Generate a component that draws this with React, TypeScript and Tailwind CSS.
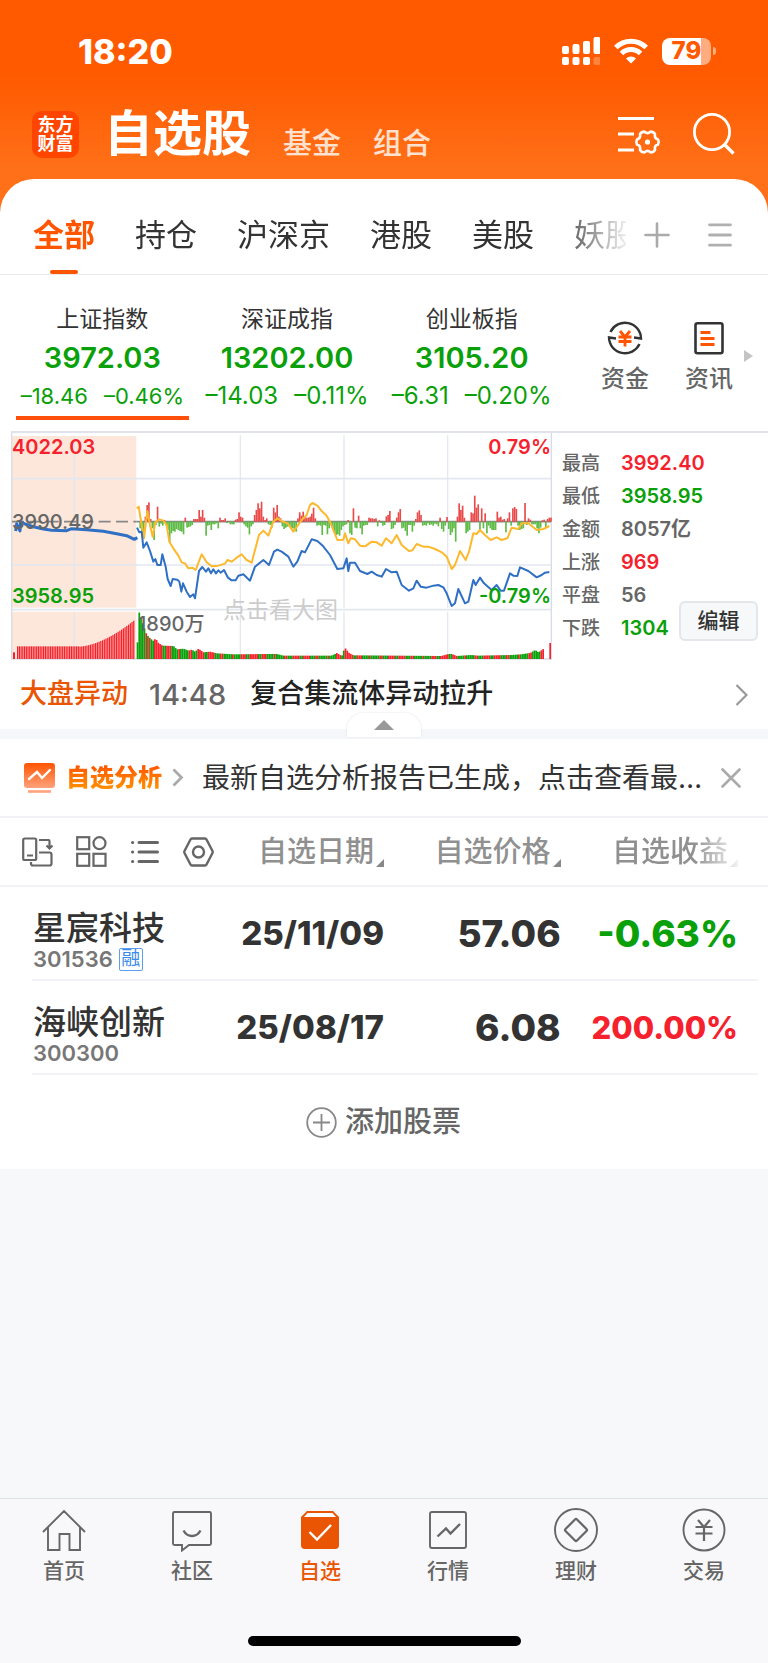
import { useState } from "react";

const tabs = ["全部", "持仓", "沪深京", "港股", "美股", "妖股"];

const indices = [
  { name: "上证指数", value: "3972.03", change: "–18.46", percent: "–0.46%", size: "text-[22px]" },
  { name: "深证成指", value: "13202.00", change: "–14.03", percent: "–0.11%", size: "text-2xl" },
  { name: "创业板指", value: "3105.20", change: "–6.31", percent: "–0.20%", size: "text-2xl" },
];

const stats = [
  { label: "最高", value: "3992.40", color: "text-[#f5222d]" },
  { label: "最低", value: "3958.95", color: "text-[#0aa00a]" },
  { label: "金额", value: "8057亿", color: "text-[#666]" },
  { label: "上涨", value: "969", color: "text-[#f5222d]" },
  { label: "平盘", value: "56", color: "text-[#666]" },
  { label: "下跌", value: "1304", color: "text-[#0aa00a]" },
];

const stocks = [
  { name: "星宸科技", code: "301536", margin: true, date: "25/11/09", price: "57.06", profit: "-0.63%", profitStyle: "text-[37px] text-[#0aa00a]" },
  { name: "海峡创新", code: "300300", margin: false, date: "25/08/17", price: "6.08", profit: "200.00%", profitStyle: "text-[31px] text-[#f5222d]" },
];

// Chart data, in units of the 1623 x 681 view box
const auctionLine =
  "14,294 17,272 27,294 29,266 42,273 67,281 97,288 122,292 167,293 182,287 227,290 277,295 317,302 347,308 370,319 379,314";

const priceLine =
  "378,284 385,298 392,296 397,344 407,328 417,354 427,386 433,378 439,396 449,396 454,364 464,401 470,438 479,459 485,438 499,440 505,446 511,476 516,451 527,476 537,492 547,484 552,496 564,414 574,402 585,416 592,406 600,421 607,409 615,421 622,412 629,419 639,411 651,434 662,442 674,442 682,428 697,424 717,443 732,401 757,381 774,396 789,356 799,350 812,356 " +
  "832,371 847,401 859,386 872,354 882,358 902,319 919,324 935,338 957,366 979,408 997,406 1007,376 1012,414 1017,389 1032,389 1047,414 1069,423 1082,416 1097,426 1112,431 1125,408 1142,418 1157,416 1172,456 1194,473 1207,466 1217,443 1229,461 1247,464 1267,458 1282,456 1297,463 1307,481 1322,519 1332,511 1342,468 1362,511 1372,506 1387,441 1394,456 1407,434 1419,451 1442,471 1457,456 1469,473 1479,473 1497,421 1507,428 1519,429 1527,403 1552,414 1577,433 1592,426 1602,419 1615,417";

const averageLine =
  "377,226 383,221 392,276 399,316 409,234 417,276 425,311 433,268 445,259 457,263 467,276 475,326 487,346 502,368 512,388 522,391 532,406 545,404 554,411 572,364 587,388 602,400 622,398 642,392 649,381 662,386 677,374 692,364 707,381 722,389 732,351 744,306 757,293 772,308 787,266 799,256 815,266 " +
  "830,271 847,296 872,261 887,246 897,216 904,210 919,218 932,234 947,248 959,271 979,321 997,320 1002,301 1012,331 1019,316 1032,319 1047,338 1062,340 1082,326 1097,328 1112,338 1125,316 1142,331 1157,306 1172,336 1194,354 1204,352 1217,333 1237,341 1252,341 1272,348 1294,359 1307,371 1322,408 1332,396 1347,354 1364,381 1374,356 1387,301 1397,303 1407,291 1422,306 1439,321 1457,313 1472,321 1489,316 1502,284 1522,288 1532,271 1552,271 1577,291 1597,288 1615,279";

const flows = [
  0, -20, -40, -48, 15, 50, 58, 8, -20, -55, -10, 45, -15, -6, -12, 5, -12, -25, -62, -35, -28, -30, -22, -25, -28, -30, -38, 12, -18, -16,
  -14, -10, 8, 8, 8, 35, 15, 35, 12, -42, -12, -10, -25, -8, -8, -5, -20, 12, 5, 5, 10, -4, 2, -8, -8, -8, 6, 8, 28, 15,
  12, -8, -14, -18, -38, -14, -8, 20, 35, 55, 40, 60, 15, 5, 10, -8, -10, -18, 42, 28, 50, 15, 10, -14, -22, -18, -15, -12, -20,
  -20, -28, -30, 10, 28, 18, 30, 14, 12, 12, 15, 24, 42, 10, -12, -10, -12, -40, -10, -12, -38, -20, -8, -20, -32,
  -40, -38, -42, -25, -14, -10, -8, 5, -35, -40, 40, -18, -20, 18, -20, -38, -12, -10, -10, 12, 10, 10, 8, 10, -14, 4, -4, -12, -10, 16,
  20, 32, -22, -20, -10, 12, 28, 38, -20, -18, -28, -42, -10, -10, -30, -12, 8, 28, 34, 20, -12, -10, -12, -5, -10, -8, -12, -6, -8, -14,
  12, -22, -30, -12, 14, -22, -40, -32, -20, -60, 15, 55, 35, 48, 12, -35, -30, -25, 28, 25, 78, 42, 52, -25, 40, -20, 25, -35, -12, -20,
  -25, -25, -25, 30, 12, 15, 6, 8, -32, 10, 28, -12, 40, 44, 38, -12, -25, -22, -20, 56, -10, 10, 6, -8, -8, -8, -20, -35, -18, 4,
  6, -18, 8, 12, 12,
];

const volumePoints = [
  [379, 50], [384, 140], [392, 115], [402, 85], [407, 72], [417, 62], [427, 54], [433, 62], [442, 48], [454, 40], [487, 39], [497, 29],
  [517, 31], [532, 25], [542, 28], [552, 22], [562, 31], [577, 20], [597, 22], [617, 17], [667, 14], [772, 15], [797, 15], [817, 10],
  [960, 10], [970, 14], [977, 18], [992, 9], [1001, 34], [1014, 18], [1027, 11], [1290, 9], [1312, 15], [1322, 15], [1337, 9], [1380, 12],
  [1400, 10], [1500, 12], [1530, 14], [1557, 18], [1572, 27], [1582, 20], [1602, 34],
];

function volumeAt(x: number) {
  const next = volumePoints.findIndex(([px]) => px >= x);
  if (next <= 0) return volumePoints[0][1];
  const [x0, h0] = volumePoints[next - 1];
  const [x1, h1] = volumePoints[next];
  return h0 + ((h1 - h0) * (x - x0)) / (x1 - x0);
}

function volumeColor(i: number) {
  if (i < 4) return "#0aa00a";
  if (i < 8) return i % 2 ? "#f5222d" : "#0aa00a";
  return (i * 7 + (i % 5) * 3) % 11 < (i > 215 ? 2 : 5) ? "#f5222d" : "#0aa00a";
}

const auctionVolumes = Array.from({ length: 68 }, (_, i) => (i < 36 ? 38 : 37 + 78 * Math.pow((i - 35) / 32, 1.7)));
const volumes = Array.from({ length: 235 }, (_, i) => volumeAt(379 + i * 5.2));

function IntradayChart() {
  return (
    <svg viewBox="0 0 1623 681" preserveAspectRatio="none" className="block h-[227px] w-full" aria-hidden="true">
      <rect x="3" y="9" width="373" height="515" fill="#fde6da" />
      <rect x="3" y="536" width="373" height="142" fill="#fde6da" />
      <g stroke="#e3e7ef" strokeWidth="5">
        <path d="M0 137H1620M0 396H1620M0 530H1620" />
        <path d="M190 7V524M190 536V678M688 7V524M688 536V678M999 7V524M999 536V678M1310 7V524M1310 536V678" strokeWidth="4" />
      </g>
      <path d="M2 0V678H1621V0" fill="none" stroke="#d8dce4" strokeWidth="4" />
      <path d="M3 266H376" stroke="#888" strokeWidth="5" strokeDasharray="36 16" />
      <path d="M376 266H1620" stroke="#888" strokeWidth="5" />
      {flows.map((flow, i) => (
        <rect
          key={i}
          x={380 + i * 5.2}
          y={flow > 0 ? 266 - flow : 266}
          width="5"
          height={Math.abs(flow)}
          fill={flow > 0 ? "#e94b4b" : "#5dbb46"}
        />
      ))}
      {auctionVolumes.map((height, i) => (
        <rect key={i} x={18 + i * 5.2} y={678 - height} width="3.8" height={height} fill="#f5222d" />
      ))}
      <rect x="6" y="658" width="6" height="20" fill="#f5222d" />
      {volumes.map((height, i) => (
        <rect key={i} x={377 + i * 5.2} y={678 - height} width="5.2" height={height} fill={volumeColor(i)} />
      ))}
      <rect x="1615" y="630" width="5" height="48" fill="#f5222d" />
      <g fill="none" strokeLinejoin="round" strokeWidth="6">
        <polyline points={auctionLine} stroke="#2f70c4" strokeWidth="9" />
        <polyline points={averageLine} stroke="#fdb92e" />
        <polyline points={priceLine} stroke="#2f70c4" />
      </g>
    </svg>
  );
}

function StatusBar() {
  return (
    <div className="flex h-[102px] items-center justify-between pr-[52px] pl-[78px]">
      <span className="text-[34px] font-extrabold">18:20</span>
      <div className="flex items-center gap-[14px]">
        <svg width="38" height="28" viewBox="0 0 38 28" fill="#fff" aria-hidden="true">
          <rect y="9" width="7" height="8" rx="2" />
          <rect x="10.500" y="7" width="7" height="10" rx="2" />
          <rect x="21" y="4" width="7" height="13" rx="2" />
          <rect x="31.500" width="7" height="17" rx="2" />
          <rect y="20" width="7" height="8" rx="2" />
          <rect x="10.500" y="20" width="7" height="8" rx="2" />
          <rect x="21" y="20" width="7" height="8" rx="2" />
          <rect x="31.500" y="20" width="7" height="8" rx="2" opacity=".25" />
        </svg>
        <svg width="34" height="26" viewBox="0 0 34 26" aria-hidden="true">
          <g fill="none" stroke="#fff" strokeWidth="5">
            <path d="M1.800 9.500a21.500 21.500 0 0 1 30.400 0" />
            <path d="M7.500 15.500a13.500 13.500 0 0 1 19 0" />
          </g>
          <path d="M17 25.500l-5-5a7 7 0 0 1 10 0z" fill="#fff" />
        </svg>
        <div className="flex items-center gap-[2px]">
          <span className="flex h-[27px] w-[49px] items-center justify-center rounded-lg bg-linear-to-r from-white from-79% to-white/50 to-79% text-2xl font-extrabold text-[#ff5a00]">
            79
          </span>
          <span className="h-2 w-[3px] rounded-r-full bg-white/50" />
        </div>
      </div>
    </div>
  );
}

function AppHeader() {
  return (
    <div className="flex h-16 items-center pr-[33px] pl-8">
      <span className="grid size-[47px] shrink-0 place-content-center rounded-[10px] bg-[#ff4500] text-center text-[18px] leading-[19px] font-bold">
        <span>东方</span>
        <span>财富</span>
      </span>
      <div className="ml-[25px] flex flex-1 items-end">
        <h1 className="text-[49px] leading-[60px] font-bold">自选股</h1>
        <button className="ml-8 text-[29px] leading-[40px] font-medium text-white/80">基金</button>
        <button className="ml-8 text-[29px] leading-[40px] font-medium text-white/80">组合</button>
      </div>
      <button aria-label="设置">
        <svg className="overflow-visible" width="42" height="40" viewBox="0 0 42 40" fill="none" stroke="#fff" strokeWidth="2.800" aria-hidden="true">
          <path d="M0 4.500h36M0 20h16M0 36h16" />
          <path
            d="M40 25.400Q41.300 28 40 30.600Q36 31.800 37 35.800Q35.500 38.400 32.500 38.400Q29.500 35.500 26.500 38.400Q23.500 38.400 22 35.800Q23 31.800 19 30.600Q17.700 28 19 25.400Q23 24.200 22 20.200Q23.500 17.600 26.500 17.600Q29.500 20.500 32.500 17.600Q35.500 17.600 37 20.200Q36 24.200 40 25.400z"
            strokeLinejoin="round"
            strokeWidth="2.600"
          />
          <circle cx="29.500" cy="28" r="2.600" fill="#fff" stroke="none" />
        </svg>
      </button>
      <button className="ml-[33px]" aria-label="搜索">
        <svg width="42" height="42" viewBox="0 0 42 42" fill="none" stroke="#fff" strokeWidth="2.800" aria-hidden="true">
          <circle cx="19" cy="19" r="17.600" />
          <path d="M31 31l9.500 9.500" strokeWidth="3.200" />
        </svg>
      </button>
    </div>
  );
}

function GroupTabs() {
  const [active, setActive] = useState("全部");

  return (
    <div className="mt-[13px] flex h-24 rounded-t-[34px] border-b border-[#e8e9ec] bg-white pt-[17px] pr-9 pl-[33px]">
      <nav className="flex min-w-0 flex-1 gap-10 overflow-hidden [mask-image:linear-gradient(to_right,#000_88%,transparent_101%)]">
        {tabs.map((tab) => (
          <button
            key={tab}
            onClick={() => setActive(tab)}
            className={`relative shrink-0 text-[31px] ${tab === active ? "font-bold text-[#ff5500]" : "text-[#333]"}`}
          >
            {tab}
            {tab === active && <span className="absolute bottom-0 left-1/2 h-1 w-7 -translate-x-1/2 rounded-full bg-[#ff5500]" />}
          </button>
        ))}
      </nav>
      <button className="ml-[18px]" aria-label="添加分组">
        <svg width="26" height="26" viewBox="0 0 26 26" stroke="#aaa" strokeWidth="2.600" strokeLinecap="round" aria-hidden="true">
          <path d="M1.500 13h23M13 1.500v23" />
        </svg>
      </button>
      <button className="ml-[38px]" aria-label="分组管理">
        <svg width="24" height="26" viewBox="0 0 24 26" stroke="#b0b0b0" strokeWidth="2.800" strokeLinecap="round" aria-hidden="true">
          <path d="M1.500 2.800h21M1.500 13h21M1.500 23.200h21" />
        </svg>
      </button>
    </div>
  );
}

function IndexStrip() {
  const [active, setActive] = useState("上证指数");

  return (
    <section className="flex pt-[30px] pr-[15px] pb-[11px] pl-[10px]">
      <div className="grid flex-1 grid-cols-3">
        {indices.map((item) => (
          <button key={item.name} onClick={() => setActive(item.name)} className="px-[6px]">
            <span className="block text-[23px] leading-7 text-[#333]">{item.name}</span>
            <span className="block text-[29px] leading-[49px] font-semibold text-[#0aa00a]">{item.value}</span>
            <span className={`flex justify-center gap-4 leading-7 whitespace-nowrap text-[#0aa00a] ${item.size}`}>
              <span>{item.change}</span>
              <span>{item.percent}</span>
            </span>
            <span className={`mt-[6px] block h-1 ${item.name === active ? "bg-[#ff4f0a]" : ""}`} />
          </button>
        ))}
      </div>
      <div className="ml-[19px] flex pt-[15px]">
        <button className="flex w-[84px] flex-col items-center text-2xl leading-8 font-medium text-[#666]">
          <svg width="36" height="36" viewBox="0 0 36 36" fill="none" aria-hidden="true">
            <g stroke="#333" strokeWidth="2.400">
              <path d="M3.500 12A16 16 0 0 1 34 18.500l-7-1" />
              <path d="M32.500 24A16 16 0 0 1 2 17.500l7 1" />
            </g>
            <path d="M13 11l5 6l5-6M11.500 17h13M11.500 21.500h13M18 17v9.500" stroke="#ff5500" strokeWidth="2.800" />
          </svg>
          <span className="mt-[7px]">资金</span>
        </button>
        <button className="flex w-[84px] flex-col items-center text-2xl leading-8 font-medium text-[#666]">
          <svg width="36" height="36" viewBox="0 0 36 36" fill="none" aria-hidden="true">
            <rect x="4.500" y="3.200" width="27" height="30" rx="2" stroke="#333" strokeWidth="2.600" />
            <path d="M9.500 12.500h10M9.500 18.500h14M9.500 24.500h14" stroke="#ff5500" strokeWidth="2.800" />
          </svg>
          <span className="mt-[7px]">资讯</span>
        </button>
      </div>
      <svg className="-ml-[7px] mt-[45px]" width="9" height="12" viewBox="0 0 9 12" fill="#c4c4c4" aria-hidden="true">
        <path d="M0 0l9 6l-9 6z" />
      </svg>
    </section>
  );
}

function MarketPanel() {
  return (
    <section className="relative ml-[11px] flex border-t-2 border-[#e0e3ea] font-semibold">
      <div className="relative min-w-0 flex-1 text-xl leading-5">
        <IntradayChart />
        <span className="absolute top-1 left-px text-[#f5222d]">4022.03</span>
        <span className="absolute top-1 right-px text-[#f5222d]">0.79%</span>
        <span className="absolute top-[79px] left-px font-medium text-[#666]">3990.49</span>
        <span className="absolute top-[153px] left-px text-[#0aa00a]">3958.95</span>
        <span className="absolute top-[153px] right-px text-[#0aa00a]">-0.79%</span>
        <span className="absolute top-[181px] left-[127px] font-medium text-[#666]">1890万</span>
        <span className="absolute top-[165px] left-[212px] text-[23px] leading-6 font-normal text-[#ccc]">点击看大图</span>
      </div>
      <dl className="w-[216px] shrink-0 pt-[14px] pl-[10px] text-xl leading-[33px]">
        {stats.map((stat) => (
          <div key={stat.label} className="flex">
            <dt className="w-[59px] text-[19px] font-medium text-[#666]">{stat.label}</dt>
            <dd className={stat.color}>{stat.value}</dd>
          </div>
        ))}
      </dl>
      <button className="absolute right-[10px] bottom-[19px] h-10 w-[79px] rounded-md border-2 border-[#e3e6eb] bg-[#f7f8fa] text-[21px] font-medium text-[#333]">
        编辑
      </button>
    </section>
  );
}

function NewsRow() {
  return (
    <>
      <a href="#" className="flex h-[69px] items-center pr-5 pl-5 text-[27px] font-medium">
        <span className="text-[#ea5504]">大盘异动</span>
        <span className="ml-[21px] text-[29px] text-[#666]">14:48</span>
        <span className="ml-6 flex-1 text-[#222]">复合集流体异动拉升</span>
        <svg width="13" height="22" viewBox="0 0 13 22" fill="none" stroke="#999" strokeWidth="2.200" aria-hidden="true">
          <path d="M1.500 1l10 10l-10 10" />
        </svg>
      </a>
      <div className="relative h-[10px] bg-[#f6f7fa]">
        <button
          className="absolute bottom-[2px] left-1/2 flex h-6 w-[74px] -translate-x-1/2 items-center justify-center rounded-t-2xl bg-white shadow-[0_0_2px_#dadde3]"
          aria-label="收起"
        >
          <svg width="20" height="10" viewBox="0 0 20 10" fill="#999" aria-hidden="true">
            <path d="M10 0l10 10H0z" />
          </svg>
        </button>
      </div>
    </>
  );
}

function AnalysisNotice() {
  return (
    <div className="relative flex h-[79px] items-center border-b-2 border-[#f2f3f6] bg-white pr-5 pl-[23px]">
      <svg width="33" height="32" viewBox="0 0 33 32" fill="none" aria-hidden="true">
        <defs>
          <linearGradient id="analysis" x2="0" y2="1">
            <stop offset="0" stopColor="#ff5500" />
            <stop offset="1" stopColor="#ffa27c" />
          </linearGradient>
        </defs>
        <rect x="1" y="1" width="31" height="25" rx="3" fill="url(#analysis)" />
        <path d="M6 17l8-7l5 6l8-8" stroke="#fff" strokeWidth="2.400" strokeLinecap="round" />
        <path d="M5 29.500h23" stroke="#ffa27c" strokeWidth="2.600" />
      </svg>
      <a href="#" className="ml-[10px] flex items-center text-2xl font-black">
        <span className="bg-linear-to-b from-[#ff4a00] to-[#ff9a00] bg-clip-text text-transparent">自选分析</span>
        <svg className="ml-[10px]" width="12" height="19" viewBox="0 0 12 19" fill="none" stroke="#aaa" strokeWidth="2.800" aria-hidden="true">
          <path d="M1.500 1.500l8 8l-8 8" />
        </svg>
      </a>
      <p className="ml-[18px] flex-1 text-[28px] whitespace-nowrap text-[#333]">最新自选分析报告已生成，点击查看最…</p>
      <button className="pr-[7px]" aria-label="关闭">
        <svg width="20" height="20" viewBox="0 0 20 20" stroke="#aaa" strokeWidth="2.600" strokeLinecap="round" aria-hidden="true">
          <path d="M1.500 1.500l17 17M18.500 1.500l-17 17" />
        </svg>
      </button>
    </div>
  );
}

function ViewTools() {
  return (
    <div className="flex items-center gap-[23px] pl-[22px] text-[#666]">
      <button aria-label="横屏">
        <svg width="31" height="30" viewBox="0 0 31 30" fill="none" stroke="currentColor" strokeWidth="2.200" aria-hidden="true">
          <rect x="1.200" y="1.500" width="13" height="21.500" rx="1.500" />
          <path d="M5 18.500h6M17 3h9.500q1 0 1 1v7M24.500 8.500l3 3l3-3M17 15.500h10.500q2 0 2 2v9q0 2-2 2H11q-2 0-2-2V25" />
        </svg>
      </button>
      <button aria-label="宫格">
        <svg width="31" height="31" viewBox="0 0 31 31" fill="none" stroke="currentColor" strokeWidth="2.200" aria-hidden="true">
          <rect x="1.200" y="1.200" width="12" height="12" />
          <circle cx="23.500" cy="7.200" r="6" />
          <rect x="1.200" y="17.800" width="12" height="12" />
          <rect x="17.500" y="17.800" width="12" height="12" />
        </svg>
      </button>
      <button aria-label="列表">
        <svg width="30" height="24" viewBox="0 0 30 24" fill="none" stroke="currentColor" strokeWidth="3" strokeLinecap="round" aria-hidden="true">
          <path d="M2.500 2.500h.2M2.500 12h.2M2.500 21.500h.2M9 2.500h18.500M9 12h18.500M9 21.500h18.500" />
        </svg>
      </button>
      <button aria-label="列表设置">
        <svg width="31" height="30" viewBox="0 0 31 30" fill="none" stroke="currentColor" strokeWidth="2.400" strokeLinejoin="round" aria-hidden="true">
          <path d="M9 1.500h13q1 0 1.500 1l6 11.500q.4 1 0 2l-6 11.500q-.5 1-1.500 1H9q-1 0-1.500-1l-6-11.500q-.4-1 0-2l6-11.500q.5-1 1.500-1z" />
          <circle cx="15.500" cy="15" r="5.500" />
        </svg>
      </button>
    </div>
  );
}

function SortHeader({ label }: { label: string }) {
  return (
    <button className="inline-flex items-end gap-[2px] text-[29px] leading-10 font-medium whitespace-nowrap text-[#909090]">
      {label}
      <svg className="mb-[5px]" width="8" height="8" viewBox="0 0 8 8" fill="#888" aria-hidden="true">
        <path d="M8 0v8H0z" />
      </svg>
    </button>
  );
}

function Watchlist() {
  return (
    <table className="w-full table-fixed bg-white">
      <thead>
        <tr className="h-[68px] border-b-2 border-[#f2f3f6]">
          <th className="w-[28%]">
            <ViewTools />
          </th>
          <th className="w-[22%] text-right">
            <SortHeader label="自选日期" />
          </th>
          <th className="w-[23%] text-right">
            <SortHeader label="自选价格" />
          </th>
          <th className="pr-[30px] text-right [mask-image:linear-gradient(to_right,#000_64%,transparent_88%)]">
            <SortHeader label="自选收益" />
          </th>
        </tr>
      </thead>
      <tbody className="font-extrabold text-[#333]">
        {stocks.map((stock) => (
          <tr key={stock.code}>
            <td className="pl-8">
              <div className="h-[94px] border-b-2 border-[#f2f3f6] pt-[22px] pl-px font-medium">
                <div className="text-[33px] leading-[38px] whitespace-nowrap">{stock.name}</div>
                <div className="flex h-6 items-center gap-[6px] text-[22px] leading-6 font-semibold text-[#777]">
                  {stock.code}
                  {stock.margin && (
                    <span className="flex h-[23px] w-6 items-center justify-center rounded-xs border border-[#5b9ff0] text-[19px] leading-5 font-normal text-[#3b8bea]">
                      融
                    </span>
                  )}
                </div>
              </div>
            </td>
            <td>
              <div className="flex h-[94px] items-center justify-end border-b-2 border-[#f2f3f6] pt-[2px] text-[33px]">{stock.date}</div>
            </td>
            <td>
              <div className="flex h-[94px] items-center justify-end border-b-2 border-[#f2f3f6] pt-[2px] text-[37px]">{stock.price}</div>
            </td>
            <td className="pr-[10px]">
              <div className={`flex h-[94px] items-center justify-end border-b-2 border-[#f2f3f6] pt-[2px] pr-5 ${stock.profitStyle}`}>
                {stock.profit}
              </div>
            </td>
          </tr>
        ))}
      </tbody>
    </table>
  );
}

const navItems = [
  { name: "首页", icon: <path d="M1 24L22 3l21 21M6 19.500V42h11.500V26h10v16H38V19.500" /> },
  {
    name: "社区",
    icon: (
      <>
        <path d="M4.500 4h35q1.500 0 1.500 1.500v30q0 1.500-1.500 1.500H19l-7 5.500V37H4.500Q3 37 3 35.500v-30Q3 4 4.500 4z" />
        <path d="M13.500 22.500q3 5.500 8.500 5.500t8.500-5.500" strokeWidth="2.400" />
      </>
    ),
  },
  {
    name: "自选",
    icon: (
      <>
        <path d="M9 3h26l6 6v28q0 4-4 4H7q-4 0-4-4V9z" fill="#ea5504" stroke="none" />
        <path d="M9.500 5h25l3.500 4H6z" fill="#fff" stroke="none" />
        <path d="M11.500 24l7.500 7.500L33 17" stroke="#fff" strokeWidth="2.400" />
      </>
    ),
  },
  {
    name: "行情",
    icon: (
      <>
        <rect x="4" y="4" width="36" height="36" rx="2" />
        <path d="M11.500 28.500l8.500-8l4.500 5L34 16" strokeWidth="2.400" />
      </>
    ),
  },
  {
    name: "理财",
    icon: (
      <>
        <circle cx="22" cy="22" r="21" />
        <path d="M21 11.500q1-1 2 0l9.500 9.500q1 1 0 2L23 32.500q-1 1-2 0L11.500 23q-1-1 0-2z" strokeWidth="2.200" />
      </>
    ),
  },
  {
    name: "交易",
    icon: (
      <>
        <circle cx="22" cy="22" r="20.500" />
        <path d="M16 12l6 7l6-7M13.500 19h17M13.500 25.500h17M22 19v14" strokeWidth="2.200" />
      </>
    ),
  },
];

function BottomNav() {
  const [active, setActive] = useState("自选");

  return (
    <footer className="mt-auto border-t border-[#dfe0e3] bg-[#f8f8fa] pt-[9px]">
      <nav className="grid grid-cols-6">
        {navItems.map((item) => (
          <button
            key={item.name}
            onClick={() => setActive(item.name)}
            className={`flex flex-col items-center text-[21px] leading-6 font-medium ${item.name === active ? "text-[#ea5504]" : "text-[#666]"}`}
          >
            <svg width="44" height="44" viewBox="0 0 44 44" fill="none" stroke="currentColor" strokeWidth="1.900" aria-hidden="true">
              {item.icon}
            </svg>
            <span className="mt-[7px]">{item.name}</span>
          </button>
        ))}
      </nav>
      <div className="mx-auto mt-[53px] mb-[17px] h-[10px] w-[273px] rounded-full bg-black" />
    </footer>
  );
}

export default function App() {
  return (
    <div className="flex min-h-screen flex-col bg-[#f7f8fa] font-['Inter','Noto_Sans_CJK_SC',sans-serif]" lang="zh-CN">
      <header className="bg-[linear-gradient(#ff5a00_75px,#ff7018_170px)] text-white">
        <StatusBar />
        <AppHeader />
        <GroupTabs />
      </header>
      <main className="bg-white">
        <IndexStrip />
        <MarketPanel />
        <NewsRow />
        <AnalysisNotice />
        <Watchlist />
        <button className="flex h-[94px] w-full items-center justify-center gap-2 pr-px text-[29px] font-medium text-[#666]">
          <svg width="31" height="31" viewBox="0 0 31 31" fill="none" stroke="#888" strokeWidth="1.800" aria-hidden="true">
            <circle cx="15.500" cy="15.500" r="14.300" />
            <path d="M15.500 7v17M7 15.500h17" />
          </svg>
          添加股票
        </button>
      </main>
      <BottomNav />
    </div>
  );
}
